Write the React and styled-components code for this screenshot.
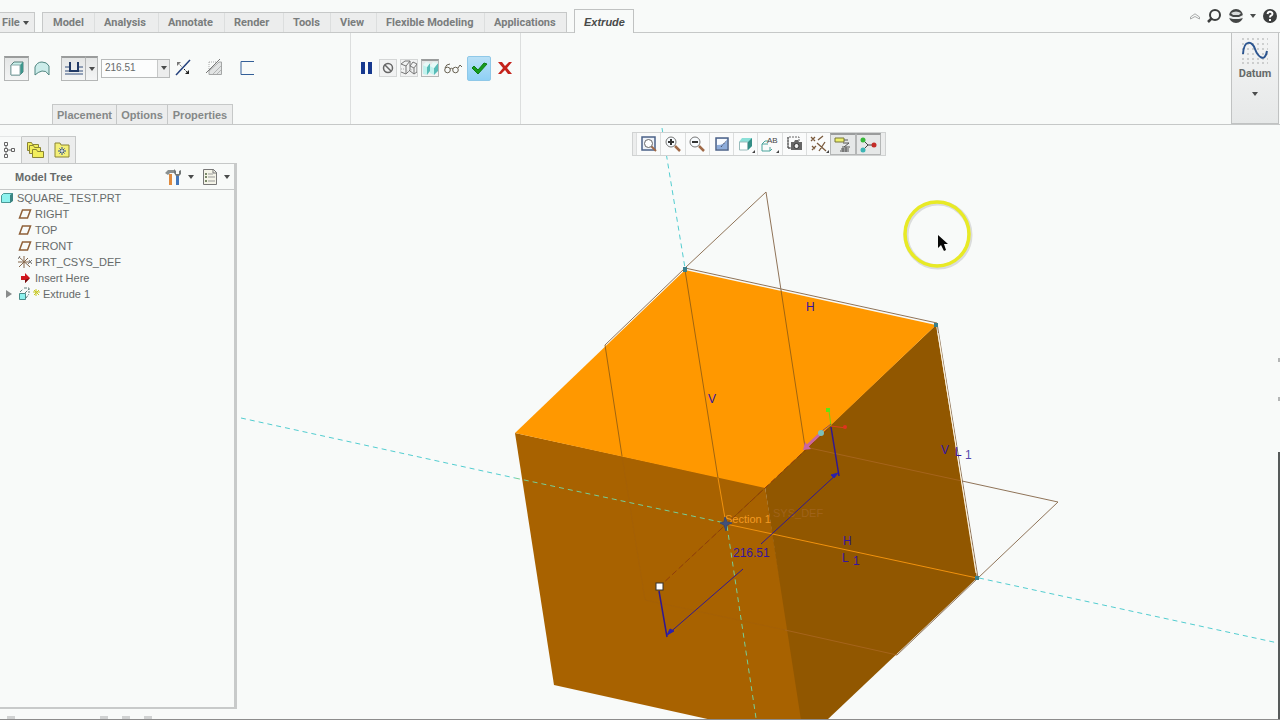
import React from "react";
import styled, { createGlobalStyle, css } from "styled-components";

const Global = createGlobalStyle`
  * { box-sizing: border-box; }
  body {
    margin: 0;
    background: #f8faf9;
    color: #666a6a;
    font-family: "Liberation Sans", Arial, sans-serif;
    font-size: 11px;
    line-height: 16px;
  }
  button, input { font: inherit; color: inherit; margin: 0; padding: 0; }
  svg { display: block; }
`;

const Page = styled.div`
  min-height: 100vh;
  display: flex;
  flex-direction: column;
  border-bottom: 1px solid #8c8c8c;
  overflow: hidden;
`;

/* ---------- tab bar ---------- */
const TabBar = styled.nav`
  display: flex;
  align-items: flex-end;
  gap: 7px;
  height: 33px;
  border-bottom: 1px solid #c6c8c8;
`;
const TabGroup = styled.div`
  display: flex;
  height: 20px;
  border: 1px solid #c6c8c8;
  border-bottom: 0;
  background: #eceded;
`;
const FileGroup = styled(TabGroup)`
  border-left: 0;
`;
const Tab = styled.button`
  width: ${(p) => p.$w}px;
  border: 0;
  border-left: 1px solid ${(p) => (p.$first ? "transparent" : "#dcdede")};
  padding-left: 9px;
  background: none;
  display: flex;
  align-items: center;
  gap: 3px;
  white-space: nowrap;
  font-family: Roboto, "Liberation Sans", sans-serif;
  font-weight: 700;
  color: #7a7d7d;
`;
const FileTab = styled(Tab)`
  padding-left: 1px;
`;
const ActiveTab = styled(Tab)`
  height: 24px;
  border: 1px solid #c0c2c2;
  border-bottom: 0;
  background: #f8faf9;
  font-family: "Liberation Sans", sans-serif;
  font-style: italic;
  color: #484a4a;
  margin-bottom: -1px;
`;
const Tools = styled.div`
  display: flex;
  align-items: center;
  gap: 4px;
  height: 32px;
  margin-left: auto;
  margin-right: 1px;
`;
const ToolLink = styled.button`
  border: 0;
  background: none;
  width: ${(p) => p.$w || 18}px;
  height: 18px;
  display: grid;
  place-items: center;
`;

/* ---------- ribbon ---------- */
const Ribbon = styled.section`
  display: flex;
  height: 92px;
  border-bottom: 1px solid #c6c8c8;
`;
const Group = styled.div`
  display: flex;
  flex-direction: column;
  justify-content: space-between;
  width: ${(p) => p.$w}px;
  padding-top: 22px;
  border-right: 1px solid #dcdede;
`;
const Row = styled.div`
  display: flex;
  align-items: center;
  height: 26px;
  gap: ${(p) => p.$gap}px;
  padding-left: ${(p) => p.$pad}px;
`;
const Cluster = styled.div`
  display: flex;
  align-items: center;
  gap: ${(p) => p.$gap || 0}px;
`;
const pressed = css`
  border: 1px solid #b4b6b6;
  border-top: 2px solid #9a9c9c;
  background: linear-gradient(#e4e6e6, #f4f5f5);
`;
const raised = css`
  border: 1px solid #d4d6d6;
  background: #f1f2f2;
`;
const accept = css`
  border: 1px solid #8fc8e8;
  border-radius: 2px;
  background: linear-gradient(#b9e0f6, #8fd0f5);
`;
const kinds = { pressed, raised, accept };
const IconButton = styled.button`
  display: grid;
  place-items: center;
  width: ${(p) => p.$w || 26}px;
  height: ${(p) => p.$h || 25}px;
  border: 0;
  background: none;
  svg { grid-area: 1 / 1; }
  ${(p) => kinds[p.$kind]}
`;
const SplitCaret = styled(IconButton)`
  border-left: 0;
`;
const Combo = styled.div`
  display: flex;
  width: 69px;
  height: 19px;
  border: 1px solid #b8baba;
  background: #fcfdfd;
`;
const ComboInput = styled.input`
  width: 55px;
  border: 0;
  padding-left: 3px;
  background: none;
  outline: 0;
  font-size: 10px;
`;
const ComboArrow = styled.button`
  flex: 1;
  border: 0;
  border-left: 1px solid #c6c8c8;
  background: #eceded;
  display: grid;
  place-items: center;
`;
const SubTabs = styled.div`
  display: flex;
  padding-left: 52px;
`;
const SubTab = styled.button`
  width: ${(p) => p.$w}px;
  height: 20px;
  border: 1px solid #c6c8c8;
  border-left-width: ${(p) => (p.$first ? 1 : 0)}px;
  border-bottom: 0;
  background: #eceded;
  font-weight: 700;
  color: #858888;
`;
const Datum = styled.button`
  width: 48px;
  margin: 0 1px 0 auto;
  border: 1px solid #c0c2c2;
  border-top: 0;
  background: linear-gradient(#f4f5f5, #e6e8e8);
  display: flex;
  flex-direction: column;
  align-items: center;
  gap: 1px;
  padding-top: 4px;
  font-family: Roboto, "Liberation Sans", sans-serif;
  font-weight: 700;
`;

/* ---------- workspace ---------- */
const Work = styled.div`
  flex: 1;
  display: flex;
`;
const Side = styled.aside`
  width: 237px;
  display: flex;
  flex-direction: column;
  padding-top: 11px;
`;
const SideTabs = styled.div`
  display: flex;
`;
const SideTab = styled.button`
  width: ${(p) => p.$w}px;
  height: 27px;
  display: grid;
  place-items: center;
  border: 0;
  border-top: 1px solid ${(p) => (p.$active ? "#e4e6e6" : "#c6c8c8")};
  border-right: 1px solid #c6c8c8;
  background: ${(p) => (p.$active ? "#f8faf9" : "#eceded")};
`;
const Panel = styled.div`
  flex: 1;
  border-top: 1px solid #c6c8c8;
  border-right: 3px solid #c8caca;
  border-bottom: 2px solid #c8caca;
`;
const PanelHead = styled.header`
  display: flex;
  align-items: center;
  height: 26px;
  padding-left: 15px;
  border-bottom: 1px solid #c6c8c8;
`;
const PanelTitle = styled.h2`
  margin: 0 auto 0 0;
  font-size: 11px;
  font-weight: 700;
`;
const Tree = styled.ul`
  list-style: none;
  margin: 0;
  padding: 0;
`;
const Node = styled.li`
  display: flex;
  align-items: center;
  gap: 3px;
  height: 16px;
  padding-left: ${(p) => p.$pad}px;
  white-space: nowrap;
`;
const Status = styled.footer`
  display: flex;
  align-items: flex-end;
  height: 10px;
  padding-left: 7px;
  gap: 14px;
`;
const Tick = styled.span`
  width: 8px;
  height: 3px;
  background: #d0d2d2;
  &:first-child { margin-right: 71px; }
`;
const Stage = styled.main`
  flex: 1;
  position: relative;
  display: flex;
  align-items: flex-start;
  padding: 7px 0 0 395px;
`;
const Scene = styled.svg`
  position: absolute;
  inset: 0;
  width: 100%;
  height: 100%;
  font-size: 12px;
`;
const ViewBar = styled.div`
  position: relative;
  display: flex;
  width: 254px;
  height: 24px;
  padding: 0 4px 0 3px;
  border: 1px solid #d0d2d2;
  background: #eceded;
`;
const ViewButton = styled.button`
  flex: 1;
  display: grid;
  place-items: center;
  border: 0;
  border-left: 1px solid #dcdede;
  background: #fafbfb;
  ${(p) => p.$on && css`
    border: 1px solid #b4b6b6;
    border-top: 2px solid #9a9c9c;
    background: #e6e8e8;
  `}
`;

/* ---------- icons ---------- */
const Ico = ({ s = 20, children, ...rest }) => (
  <svg width={s} height={s} viewBox={`0 0 ${s} ${s}`} fill="none" aria-hidden="true" {...rest}>
    {children}
  </svg>
);
const Caret = () => (
  <svg width="6" height="4" viewBox="0 0 6 4" aria-hidden="true"><path d="M0 0h6L3 4z" fill="#4a4c4c" /></svg>
);
const Cube = () => (
  <Ico>
    <path d="M4 6l3-3h9v10l-3 3H4z" fill="#c8f0ea" stroke="#557c78" />
    <path d="M13 6l3-3v10l-3 3z" fill="#3d968c" />
    <path d="M4 6h9v10H4z" fill="#fff" stroke="#8aa" />
  </Ico>
);
const Surface = () => (
  <Ico>
    <path d="M3 17V9Q5 4 10 4T17 8V17Q14 12 10 13T3 17z" fill="#ccecea" stroke="#4f8580" />
  </Ico>
);
const Depth = () => (
  <Ico>
    <path d="M1 8h4M15 8h4M1 12h4M15 12h4M1 15h18" stroke="#334f7c" />
    <path d="M6 3v9h8V3" stroke="#223a66" strokeWidth="2" />
  </Ico>
);
const Flip = () => (
  <Ico>
    <path d="M3 17L17 2" stroke="#24407c" strokeWidth="1.500" />
    <path d="M4 4h4L4 8z" fill="#777" /><path d="M5 5l4 4" stroke="#777" strokeDasharray="2 1" />
    <path d="M16 16v-4l-4 4z" fill="#222" /><path d="M11 11l4 4" stroke="#222" strokeDasharray="2 1" />
  </Ico>
);
const RemoveMat = () => (
  <Ico>
    <path d="M4 4h8M4 4v7" stroke="#aaa" strokeDasharray="1 1" />
    <path d="M4 16.500V13L14 4h2.500v12.500z" fill="#e2e4e4" stroke="#a4a6a6" />
    <path d="M8 16l8-8M12 16l4-4" stroke="#b4b6b6" />
    <path d="M1 15L15 1" stroke="#777" />
  </Ico>
);
const Thicken = () => (
  <Ico><path d="M17 3.500H4v13h13" stroke="#345f98" /></Ico>
);
const Pause = () => (
  <Ico><path d="M5 4h4v12H5zM12 4h4v12h-4z" fill="#17398f" /></Ico>
);
const Ban = () => (
  <Ico s={16}><circle cx="8" cy="8" r="4.500" stroke="#666" strokeWidth="1.500" /><path d="M5 5l6 6" stroke="#666" strokeWidth="1.500" /></Ico>
);
const WireBoxes = () => (
  <Ico s={16}>
    <path d="M0 4l5 2v8l-5-2M5 6l4-5v9l-4 4M0 4l4-3h5M9 6l4 2v6l-4-3M13 8l3-4v8l-3 2M9 6l3-4 4 2" stroke="#777" />
    <path d="M0 9h4l4 3 7-6" stroke="#aaa" strokeDasharray="1 1" />
  </Ico>
);
const SolidBoxes = () => (
  <Ico s={16}>
    <path d="M1 4l4 2v8l-4-1zM8 5l4 2v7l-4-2z" fill="#c2f2ee" />
    <path d="M5 6l3-4v8l-3 4zM12 7l4-5v8l-4 4z" fill="#58bcb8" />
    <path d="M1 4l3-3 4 1-3 4M8 5l3-4 5 1-4 5" fill="#e6faf8" />
  </Ico>
);
const Glasses = () => (
  <Ico>
    <circle cx="4.500" cy="12" r="2.800" stroke="#665f50" /><circle cx="12.500" cy="12" r="2.800" stroke="#665f50" />
    <path d="M7 11q1.500-1.500 3 0M2 10q1-4 5-4M15 10l2-3 2 2" stroke="#665f50" />
  </Ico>
);
const Check = () => (
  <Ico><path d="M3 10l2-2 4 4 6-7 3 1-9 10z" fill="#169c1c" stroke="#0d7d14" /></Ico>
);
const Cross = () => (
  <Ico><path d="M3 4h4l3 4 4-4h3l-5 6 5 6h-4l-3-4-4 4H3l5-6z" fill="#c4221b" /></Ico>
);
const Folder = ({ x, y }) => (
  <path transform={`translate(${x} ${y})`} d="M.5 1.500h4l1 2h6v6H.5z" fill="#f2ee5c" stroke="#8a8433" />
);
const Plane = () => (
  <Ico s={14}><path d="M4.500 3h8l-3 8h-8z" stroke="#8f6038" strokeWidth="1.500" /></Ico>
);
const Magnifier = ({ minus }) => (
  <Ico>
    <path d="M12 12l5 5" stroke="#a06a48" strokeWidth="2.500" />
    <circle cx="8" cy="8" r="5" fill="#f8fcff" stroke="#777" />
    <path d={minus ? "M5 8h6" : "M5 8h6M8 5v6"} stroke="#333" strokeWidth="2" />
  </Ico>
);

const tabs = [["Model", 51], ["Analysis", 64], ["Annotate", 66], ["Render", 59], ["Tools", 47], ["View", 46], ["Flexible Modeling", 108], ["Applications", 82]];

const viewTools = [
  ["Refit", <Ico><path d="M3 3h13v13H3z" fill="#eef3fa" stroke="#4b6288" strokeWidth="1.500" /><path d="M12 12l5 5" stroke="#a06a48" strokeWidth="2" /><circle cx="9.500" cy="9.500" r="4" fill="#fff" stroke="#666" /></Ico>],
  ["Zoom in", <Magnifier />],
  ["Zoom out", <Magnifier minus />],
  ["Repaint", <Ico><path d="M4 4h12v12H4z" fill="#c8daf0" stroke="#4b6288" strokeWidth="1.500" /><path d="M5 15V9q5 3 10-4v10z" fill="#8eaddb" /><path d="M5 5h10q-2 6-10 6z" fill="#f8fbff" /><path d="M9 13l5-6" stroke="#334" strokeDasharray="1 1" /></Ico>],
  ["Display style", <Ico><path d="M3 8l3-4h10v8l-4 4H3z" fill="#8be0d8" /><path d="M12 8l4-4v8l-4 4z" fill="#348e86" /><path d="M3.500 8h8v8h-8z" fill="#fff" stroke="#9bb" /><path d="M19 16v3h-3z" fill="#444" /></Ico>],
  ["Saved orientations", <Ico><path d="M8 7H5l-3 3v7h8v-4M2 10h6M10 17l2-2" stroke="#4aa49c" /><text x="7" y="9" fontSize="8" fill="#444" fontFamily="Liberation Sans">AB</text><path d="M19 16v3h-3z" fill="#444" /></Ico>],
  ["View manager", <Ico><path d="M4 14V3h11v4" stroke="#666" strokeDasharray="2 1" /><path d="M4 3v11h3M4 14h2" stroke="#555" /><path d="M7 8h3l1-2h3l1 2h3v8H7z" fill="#666" /><circle cx="12.500" cy="12" r="2.500" fill="#eee" stroke="#333" /></Ico>],
  ["Datum display", <Ico><path d="M2 3l4 4M6 3L2 7M9 6l5-4M8 9l9 8M16 8l-6 9M3 16l4-4M3 12l3 3" stroke="#7a5a3c" strokeWidth="1.300" /><path d="M20 16v3h-3z" fill="#444" /></Ico>],
  ["Annotations", <Ico><path d="M2 3h9v4H2z" fill="#eef06a" stroke="#77763a" /><path d="M11 5h4M10 8h6l-5 4h6M8 14h8M10 11v6M13 12v5M7 16h9" stroke="#555" /></Ico>, true],
  ["Spin center", <Ico><path d="M5 5l5 5 6 0M10 10l-5 5" stroke="#444" /><circle cx="5" cy="5" r="2.500" fill="#36b838" /><circle cx="16" cy="10" r="2.500" fill="#c42c28" /><circle cx="5" cy="15" r="2.500" fill="#3cb4b4" /></Ico>, true],
];

const planes = ["RIGHT", "TOP", "FRONT"];

function Model() {
  return (
    <Scene viewBox="237 125 1043 594" preserveAspectRatio="xMinYMin slice" role="img" aria-label="Extruded cube preview">
      <path d="M515 433L765 487 803 720H712L554 685z" fill="#a86200" />
      <path d="M936 325L977 578 827 720H801L765 487z" fill="#915700" />
      <path d="M685 270L936 325 765 488 515 433z" fill="#ff9800" />

      <g fill="none" stroke="#8f7358">
        <path d="M605 345L685 268 766 192 781 290M962 481L1058 502 897 655" />
        <path d="M685 268L937 323 978 578" />
        <path d="M781 290L805 447M605 345L622 456M685 270L718 478" stroke="#a06510" />
        <path d="M622 456L645 600 785 630" stroke="#a0600c" strokeOpacity=".4" />
        <path d="M805 447L962 481M785 630L897 655" stroke="#a5641b" />
      </g>
      <path d="M938 333L976 573" stroke="#fff3da" />
      <path d="M718 478L726 524 977 578" fill="none" stroke="#f0920e" />

      <g stroke="#52cdd0" strokeDasharray="5 4" fill="none">
        <path d="M241 418L515 478M662 128L685 268M979 578L1278 643" />
        <path d="M515 478L725 523M727 526L756 718" stroke="#76cf98" />
      </g>
      <path d="M659 587L765 488 830 427" stroke="#8f3d0c" strokeDasharray="6 3" />

      <text x="773" y="517" fontSize="11" fill="#a96b2b" fillOpacity=".6">SYS_DEF</text>
      <text x="725" y="523" fontSize="11" fill="#f39a22">Section 1</text>

      <g fill="none" stroke="#301890">
        <path d="M831 427L839 476M659 591L667 637" strokeWidth="1.500" />
        <path d="M838 473L761 544M743 569L667 635" />
      </g>
      <path d="M838 473l-7 2 3 3zM667 635l3-6 4 2z" fill="#2a20b0" stroke="#2a20b0" />
      <g fill="#3414a0">
        <text x="733" y="557">216.51</text>
        <text x="806" y="311">H</text>
        <text x="708" y="403">V</text>
        <text x="843" y="545">H</text>
        <text x="842" y="562">L</text>
        <text x="853" y="565">1</text>
        <text x="941" y="454">V</text>
        <text x="955" y="456">L</text>
        <text x="965" y="459" fill="#5548ae">1</text>
      </g>

      <rect x="656" y="583" width="7" height="7" fill="#fff" stroke="#333" />
      <path d="M725 517l2 5 5 1-5 2-1 6-2-6-4-2 4-1z" fill="#40507c" stroke="#39496f" />
      <g fill="#397f8c"><path d="M683 267h4v5h-4zM934 323h4v4h-4zM975 576h4v4h-4z" /></g>
      <path d="M829 411L831 426" stroke="#76d40c" />
      <path d="M831 426L846 428" stroke="#d94120" />
      <path d="M803 450l2-8 6 7z" fill="#c866a0" />
      <path d="M806 447L820 434" stroke="#c866a0" strokeWidth="3" />
      <path d="M822 431L831 424" stroke="#8b4d5e" />
      <circle cx="821" cy="433" r="3" fill="#7cc0bb" />
      <path d="M826 408h4v4h-4z" fill="#5ce614" />
      <circle cx="845" cy="427" r="2" fill="#e0331e" />

      <circle cx="938" cy="235" r="32" fill="none" stroke="#999" strokeOpacity=".3" strokeWidth="5" />
      <circle cx="937" cy="234" r="32" fill="none" stroke="#e8ea25" strokeWidth="3.500" />
      <path d="M938 235v13l3-3 3 6 2-1-2-6h4z" fill="#080808" />

      <path d="M1278 358h2v4h-2zM1278 397h2v4h-2z" fill="#b4b6b6" />
      <path d="M1278 452h2v267h-2z" fill="#565a5a" />
    </Scene>
  );
}

export default function App() {
  return (
    <>
      <Global />
      <Page>
        <TabBar>
          <FileGroup><FileTab $w={34} $first>File <Caret /></FileTab></FileGroup>
          <TabGroup>
            {tabs.map(([name, w], i) => <Tab key={name} $w={w} $first={i === 0}>{name}</Tab>)}
          </TabGroup>
          <ActiveTab $w={60}>Extrude</ActiveTab>
          <Tools>
            <ToolLink $w={12} aria-label="Minimize ribbon">
              <svg width="10" height="7" viewBox="0 0 10 7" fill="none" stroke="#a8aaaa"><path d="M.5 4L5 .8 9.500 4v2L5 3.500.5 6z" /></svg>
            </ToolLink>
            <ToolLink aria-label="Search">
              <Ico s={16}><circle cx="9" cy="7" r="5" stroke="#3c3e3e" strokeWidth="2" /><path d="M6 10l-4 4" stroke="#3c3e3e" strokeWidth="2.500" /></Ico>
            </ToolLink>
            <ToolLink aria-label="Learning connector">
              <Ico s={16}><circle cx="8" cy="8" r="7" fill="#444646" /><path d="M3 5q5-3 10 0l-2 2H5z" fill="#d8dada" /><path d="M1 7l4 2h6l4-2v3l-4 1H5l-4-1z" fill="#eceeee" /></Ico>
            </ToolLink>
            <ToolLink $w={8} aria-label="More"><Caret /></ToolLink>
            <ToolLink aria-label="Help">
              <Ico s={16}><circle cx="8" cy="8" r="7" fill="#3c3e3e" /><path d="M5.500 6q.5-2.500 2.800-2.200 2.500.4 2 2.400-.3 1-1.300 1.500-1 .5-1 1.800M8 11v2" stroke="#fff" strokeWidth="2" /></Ico>
            </ToolLink>
          </Tools>
        </TabBar>

        <Ribbon>
          <Group $w={351}>
            <Row $gap={6} $pad={4}>
              <Cluster>
                <IconButton $w={25} $kind="pressed" aria-label="Solid"><Cube /></IconButton>
                <IconButton aria-label="Surface"><Surface /></IconButton>
              </Cluster>
              <Cluster $gap={3}>
                <Cluster>
                  <IconButton $w={25} $kind="pressed" aria-label="Depth type"><Depth /></IconButton>
                  <SplitCaret $w={12} $kind="pressed" aria-label="Depth options"><Caret /></SplitCaret>
                </Cluster>
                <Cluster>
                  <Combo>
                    <ComboInput aria-label="Depth" defaultValue="216.51" />
                    <ComboArrow aria-label="Recent depths"><Caret /></ComboArrow>
                  </Combo>
                  <IconButton aria-label="Flip direction"><Flip /></IconButton>
                </Cluster>
              </Cluster>
              <IconButton aria-label="Remove material"><RemoveMat /></IconButton>
              <IconButton aria-label="Thicken sketch"><Thicken /></IconButton>
            </Row>
            <SubTabs>
              <SubTab $w={65} $first>Placement</SubTab>
              <SubTab $w={51}>Options</SubTab>
              <SubTab $w={65}>Properties</SubTab>
            </SubTabs>
          </Group>
          <Group $w={170}>
            <Row $gap={3} $pad={5}>
              <IconButton $w={20} aria-label="Pause"><Pause /></IconButton>
              <IconButton $w={18} $h={18} $kind="raised" aria-label="No preview"><Ban /></IconButton>
              <IconButton $w={18} $h={18} $kind="raised" aria-label="Unattached preview"><WireBoxes /></IconButton>
              <IconButton $w={18} $h={18} $kind="pressed" aria-label="Attached preview"><SolidBoxes /></IconButton>
              <IconButton $w={22} aria-label="Verify"><Glasses /></IconButton>
              <IconButton $w={24} $kind="accept" aria-label="Accept"><Check /></IconButton>
              <IconButton $w={22} aria-label="Cancel"><Cross /></IconButton>
            </Row>
          </Group>
          <Datum>
            <Ico s={28}>
              <path d="M1 2h26M1 7h26M1 12h26M1 17h26M1 22h26M1 26h26" stroke="#a9abab" strokeDasharray="2 3" />
              <path d="M2 17C3 2 11 4 14 12S24 26 26 14" stroke="#2c5590" strokeWidth="2" />
            </Ico>
            Datum
            <Ico><path d="M7 9h6l-3 4z" fill="#4a4c4c" /></Ico>
          </Datum>
        </Ribbon>

        <Work>
          <Side>
            <SideTabs>
              <SideTab $w={22} $active aria-label="Model tree">
                <Ico><path d="M3.500 2.500h3v3h-3zM3.500 8.500h3v3h-3zM3.500 14.500h3v3h-3zM10.500 8.500h3v3h-3zM5 6v2M5 12v2M7 10h3" stroke="#666" /></Ico>
              </SideTab>
              <SideTab $w={27} aria-label="Folder browser">
                <Ico><Folder x={2} y={1} /><Folder x={4} y={4} /><Folder x={7} y={8} /></Ico>
              </SideTab>
              <SideTab $w={27} aria-label="Favorites">
                <Ico><path d="M3 6V3h5l1 2h8v12H3z" fill="#f4f078" stroke="#8a8433" /><path d="M10 7v8M6 11h8M7.500 8.500l5 5M12.500 8.500l-5 5" stroke="#2a4a9a" /><circle cx="10" cy="11" r="1" fill="#fff" /></Ico>
              </SideTab>
            </SideTabs>
            <Panel>
              <PanelHead>
                <PanelTitle>Model Tree</PanelTitle>
                <ToolLink aria-label="Settings">
                  <Ico s={18}><path d="M1 5l3-3h6v3H6L4 7z" fill="#8a9090" /><path d="M5 6h3v11H5z" fill="#df8a3d" /><path d="M12 7h3v10h-3z" fill="#4377bb" /><path d="M10 1l2 2v3h3V3l2-1v4l-2 2h-3l-2-3z" fill="#737878" /></Ico>
                </ToolLink>
                <ToolLink aria-label="Settings menu"><Caret /></ToolLink>
                <ToolLink $w={20} aria-label="Show">
                  <Ico s={18}><path d="M2.500 1.500h10l3 3v12h-13z" fill="#f4f4e8" stroke="#777" /><path d="M12 1v4h4" stroke="#777" /><path d="M7 6h5M7 9h7M7 13h7" stroke="#999" /><path d="M4 5h2v2H4zM4 8h2v2H4zM4 12h2v2H4z" fill="#7a8a68" /></Ico>
                </ToolLink>
                <ToolLink $w={14} aria-label="Show menu"><Caret /></ToolLink>
              </PanelHead>
              <Tree>
                <Node $pad={0}>
                  <Ico s={14}><path d="M1.500 4.500l2-2h9v7l-2 2h-9z" fill="#8df2ee" stroke="#4a9896" /><path d="M10 4l3-2v8l-3 2z" fill="#3c8482" /></Ico>
                  SQUARE_TEST.PRT
                </Node>
                {planes.map((name) => <Node key={name} $pad={18}><Plane />{name}</Node>)}
                <Node $pad={18}>
                  <Ico s={14}><path d="M1 2l11 10M1 12l9-9M0 7h13M6 1v12" stroke="#85664a" /><path d="M0 4l2-3M10 9l4-4M11 5l3 4" stroke="#777" /></Ico>
                  PRT_CSYS_DEF
                </Node>
                <Node $pad={18}>
                  <Ico s={14}><path d="M3 5h4V2l5 5-5 5V9H3z" fill="#d0161e" /><path d="M7 9l5-2-5 5z" fill="#6e1010" /></Ico>
                  Insert Here
                </Node>
                <Node $pad={5}>
                  <Ico s={8}><path d="M1 0l6 4-6 4z" fill="#8a8c8c" /></Ico>
                  <svg width="24" height="14" viewBox="0 0 24 14" fill="none" aria-hidden="true">
                    <path d="M3.500 6.500h6v6h-6z" fill="#8df2ee" stroke="#4a8c8a" /><path d="M4 5l3-3M8 1h5v5M10 11l3-4M9 6l4-4" stroke="#667f7d" strokeDasharray="3 1" />
                    <path d="M20 2v7M17 5h7M18 3l5 5M23 3l-5 5" stroke="#c8c822" />
                  </svg>
                  Extrude 1
                </Node>
              </Tree>
            </Panel>
            <Status><Tick /><Tick /><Tick /><Tick /></Status>
          </Side>
          <Stage>
            <Model />
            <ViewBar role="toolbar" aria-label="Graphics toolbar">
              {viewTools.map(([name, icon, on]) => <ViewButton key={name} aria-label={name} $on={on}>{icon}</ViewButton>)}
            </ViewBar>
          </Stage>
        </Work>
      </Page>
    </>
  );
}
